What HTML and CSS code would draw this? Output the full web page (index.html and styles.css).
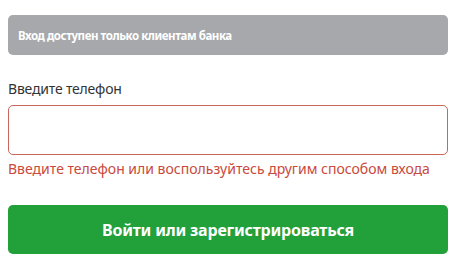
FILE: index.html
```html
<!DOCTYPE html>
<html lang="ru">
<head>
<meta charset="utf-8">
<link rel="stylesheet" href="styles.css">
</head>
<body>
<div class="form">
  <div class="notice">Вход доступен только клиентам банка</div>
  <label class="label" for="phone">Введите телефон</label>
  <input class="input" id="phone" type="tel">
  <div class="error">Введите телефон или воспользуйтесь другим способом входа</div>
  <button class="btn">Войти или зарегистрироваться</button>
</div>
</body>
</html>
```
FILE: styles.css
```css
html, body { margin: 0; padding: 0; background: #fff; }
body { font-family: "Noto Sans", "Open Sans", sans-serif; }
.form {
  width: 440px;
  padding: 15px 10px 0 8px;
  display: flex;
  flex-direction: column;
}
.notice {
  height: 40px;
  box-sizing: border-box;
  background: #a6a8ab;
  border-radius: 5px;
  color: #fff;
  font-weight: 700;
  font-size: 11.5px;
  letter-spacing: -0.45px;
  padding-left: 10px;
  display: flex;
  align-items: center;
}
.label {
  margin-top: 25px;
  font-size: 14px;
  line-height: 18px;
  letter-spacing: -0.2px;
  color: #333;
}
.input {
  margin-top: 7px;
  height: 50px;
  box-sizing: border-box;
  border: 1px solid #c9675b;
  border-radius: 5px;
  outline: none;
  font: inherit;
}
.error {
  margin-top: 4px;
  font-size: 14px;
  line-height: 20px;
  color: #c9493b;
}
.btn {
  margin-top: 26px;
  height: 49px;
  border: none;
  border-radius: 5px;
  background: #22a03a;
  color: #fff;
  font-family: inherit;
  font-weight: 700;
  font-size: 16px;
  letter-spacing: -0.2px;
}
```
